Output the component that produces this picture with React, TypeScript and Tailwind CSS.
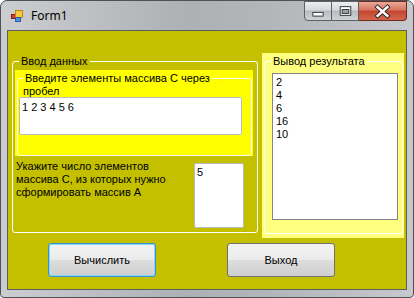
import React from 'react';

function FormIcon() {
  return (
    <svg width="12" height="12" viewBox="0 0 12 12">
      <rect x="0.5" y="4.5" width="4" height="4" fill="#d83a2c" stroke="#8c1d14" />
      <rect x="4.5" y="0.5" width="7" height="7" fill="#f8c93a" stroke="#c48612" />
      <rect x="4.5" y="7.5" width="5" height="4" fill="#4f90e2" stroke="#2a5fae" />
    </svg>
  );
}

function CaptionButtons() {
  return (
    <div className="flex self-start mr-[6px]">
      <div className="w-[28px] h-[20px] flex items-center justify-center border border-[#5c6064] rounded-bl-[4px] bg-[linear-gradient(to_bottom,#eceef0_0%,#d6d9dc_45%,#b8bcc1_50%,#cfd2d5_100%)]">
        <svg width="28" height="20" viewBox="0 0 28 20">
          <rect x="8.5" y="11.5" width="11" height="4" fill="#ffffff" stroke="#2e3236" />
        </svg>
      </div>
      <div className="w-[27px] h-[20px] flex items-center justify-center border-y border-r border-[#5c6064] bg-[linear-gradient(to_bottom,#eceef0_0%,#d6d9dc_45%,#b8bcc1_50%,#cfd2d5_100%)]">
        <svg width="27" height="20" viewBox="0 0 27 20">
          <rect x="8.5" y="5.5" width="11" height="9" fill="#ffffff" stroke="#2e3236" />
          <rect x="10.5" y="8.5" width="7" height="4" fill="#9ea3a8" stroke="#2e3236" />
        </svg>
      </div>
      <div className="w-[48px] h-[20px] flex items-center justify-center border-y border-r border-[#6e2a20] rounded-br-[4px] bg-[linear-gradient(to_bottom,#eaa898_0%,#d7745f_45%,#c24630_50%,#d4664c_100%)]">
        <svg width="48" height="20" viewBox="0 0 48 20">
          <path d="M19 6 L29 15 M29 6 L19 15" stroke="#3a2a28" strokeWidth="4.5" strokeLinecap="square" />
          <path d="M19 6 L29 15 M29 6 L19 15" stroke="#ffffff" strokeWidth="2.5" strokeLinecap="square" />
        </svg>
      </div>
    </div>
  );
}

export default function App() {
  const btn =
    'w-[108px] h-[34px] rounded-[3px] flex items-center justify-center bg-[linear-gradient(to_bottom,#f2f2f2_0%,#ebebeb_50%,#dddddd_50%,#cfcfcf_100%)]';

  return (
    <div className="w-[414px] h-[298px] bg-white font-['Liberation_Sans',sans-serif] text-[11px] leading-[13px] text-black">
      <div className="w-[414px] h-[298px] flex flex-col border border-[#4e5256] rounded-t-[7px] rounded-b-[4px] overflow-hidden bg-[linear-gradient(to_right,#cbcdd0_0%,#aeb1b4_45%,#b3b6b9_65%,#c6c8cb_100%)]">
        {/* title bar */}
        <div className="h-[30px] flex shrink-0">
          <div className="flex items-center pl-[10px] gap-[8px]">
            <FormIcon />
            <span className="font-['Noto_Sans',sans-serif] text-[12px] leading-[16px]">Form1</span>
          </div>
          <div className="ml-auto flex">
            <CaptionButtons />
          </div>
        </div>

        {/* client area */}
        <div className="mx-[7px] h-[258px] bg-[#c4c000] shadow-[0_0_0_1px_#5b5f63] flex flex-col">
          <div className="flex items-start pt-[22px] pl-[4px] pr-[2px] gap-[4px]">
            <fieldset className="mt-[2px] w-[246px] border border-white rounded-[3px] pb-[4px]">
              <legend className="ml-[6px] px-[2px]">Ввод данных</legend>
              <div className="ml-[2px] mt-[2px] w-[238px] bg-[#ffff00] pl-[2px] pt-[2px] pr-[1px]">
                <fieldset className="border border-white rounded-[3px] pb-[20px]">
                  <legend className="ml-[5px] px-[2px]">Введите элементы массива С через</legend>
                  <div className="pl-[5px] h-[12px] leading-[12px]">пробел</div>
                  <div className="ml-[1px] w-[223px] h-[38px] bg-white border border-[#b9bcc2] rounded-[2px] pl-[2px] pt-[3px]">
                    1 2 3 4 5 6
                  </div>
                </fieldset>
              </div>
              <div className="flex justify-between items-start mt-[4px] pl-[3px] pr-[13px]">
                <p className="w-[172px]">Укажите число элементов массива С, из которых нужно сформировать массив А</p>
                <div className="mt-[3px] w-[50px] h-[65px] bg-white border border-[#b9bcc2] rounded-[2px] pl-[2px] pt-[2px]">5</div>
              </div>
            </fieldset>

            <div className="w-[142px] bg-[#ffff80] pl-[2px] pt-[2px] pr-[1px] pb-[4px]">
              <fieldset className="border border-white rounded-[3px] pb-[13px]">
                <legend className="ml-[6px] px-[2px]">Вывод результата</legend>
                <div className="ml-[7px] mt-[5px] w-[126px] h-[147px] bg-white border border-[#858585] pl-[3px] pt-[2px]">
                  <div>2</div>
                  <div>4</div>
                  <div>6</div>
                  <div>16</div>
                  <div>10</div>
                </div>
              </fieldset>
            </div>
          </div>

          <div className="flex mt-[5px] pl-[40px] gap-[71px]">
            <button className={`${btn} border border-[#3591d4] shadow-[inset_0_0_0_1px_#86d6f8]`}>Вычислить</button>
            <button className={`${btn} border border-[#707070]`}>Выход</button>
          </div>
        </div>
      </div>
    </div>
  );
}
